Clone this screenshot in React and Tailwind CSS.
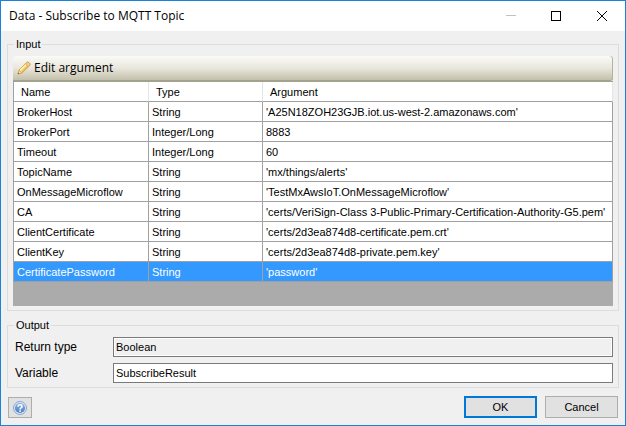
import React from "react";

const rows = [
  ["BrokerHost", "String", "'A25N18ZOH23GJB.iot.us-west-2.amazonaws.com'"],
  ["BrokerPort", "Integer/Long", "8883"],
  ["Timeout", "Integer/Long", "60"],
  ["TopicName", "String", "'mx/things/alerts'"],
  ["OnMessageMicroflow", "String", "'TestMxAwsIoT.OnMessageMicroflow'"],
  ["CA", "String", "'certs/VeriSign-Class 3-Public-Primary-Certification-Authority-G5.pem'"],
  ["ClientCertificate", "String", "'certs/2d3ea874d8-certificate.pem.crt'"],
  ["ClientKey", "String", "'certs/2d3ea874d8-private.pem.key'"],
  ["CertificatePassword", "String", "'password'"],
];

function PencilIcon() {
  return (
    <svg width="14" height="14" viewBox="0 0 14 14" aria-hidden="true">
      <path d="M1 13 L2.2 9 L9.2 1.8 Q10.6 0.4 12 1.6 L12.6 2.3 Q13.6 3.6 12.3 5 L5 12 Z" fill="#f8d679" stroke="#c79a4a" strokeWidth="0.8" strokeLinejoin="round" />
      <path d="M3.4 9.2 L9.8 2.8" stroke="#fff0b0" strokeWidth="1.4" />
      <path d="M5 10.9 L11.6 4.4" stroke="#ecb450" strokeWidth="1.2" />
      <path d="M9.2 1.8 Q10.6 0.4 12 1.6 L12.6 2.3 Q13.6 3.6 12.3 5 L11.4 5.8 L8.4 2.7 Z" fill="#f6c795" stroke="#c79a4a" strokeWidth="0.6" />
      <path d="M1 13 L2.1 9.4 L4.7 11.9 Z" fill="#f5e3c4" stroke="#c79a4a" strokeWidth="0.6" />
      <path d="M0.9 13.1 L1.4 11.6 L2.5 12.6 Z" fill="#6a5638" />
    </svg>
  );
}

function HelpIcon() {
  return (
    <svg width="14" height="14" viewBox="0 0 14 14" aria-hidden="true">
      <defs>
        <linearGradient id="helpFill" x1="0" y1="0" x2="0" y2="1">
          <stop offset="0" stopColor="#8fb3e0" />
          <stop offset="1" stopColor="#4a7fc2" />
        </linearGradient>
      </defs>
      <circle cx="7" cy="7" r="6.5" fill="#dce8f7" stroke="#7d9fcd" strokeWidth="0.9" />
      <circle cx="7" cy="7" r="5.1" fill="url(#helpFill)" />
      <path d="M5 5.6 Q5.1 3.8 7 3.8 Q9 3.8 9 5.4 Q9 6.4 8 6.9 Q7.1 7.4 7.1 8.4" fill="none" stroke="#fff" strokeWidth="1.6" />
      <rect x="6.3" y="9.3" width="1.6" height="1.6" fill="#fff" />
    </svg>
  );
}

function Group({ title, className, children }) {
  return (
    <fieldset className={`min-w-0 border border-[#dcdcdc] px-[5px] pt-1 pb-1 ${className}`}>
      <legend className="ml-px h-4 px-0.5 leading-4">{title}</legend>
      {children}
    </fieldset>
  );
}

export default function App() {
  return (
    <main className="flex min-h-screen flex-col border border-[#1883d7] bg-[#f0f0f0] font-['Liberation_Sans',Arial,sans-serif] text-[11px] text-black">
      <header className="flex h-[30px] shrink-0 items-center justify-between bg-white pl-2 font-['Open_Sans','Noto_Sans',sans-serif]">
        <h1 className="text-[12px]">Data - Subscribe to MQTT Topic</h1>
        <div className="flex h-full">
          <button type="button" aria-label="Minimize" disabled className="flex w-[45px] items-center justify-center">
            <svg width="10" height="10" shapeRendering="crispEdges"><path d="M0 4.5H10" stroke="#c0c0c0" /></svg>
          </button>
          <button type="button" aria-label="Maximize" className="flex w-[45px] items-center justify-center">
            <svg width="10" height="10" shapeRendering="crispEdges"><rect x="0.5" y="0.5" width="9" height="9" fill="none" stroke="#000" /></svg>
          </button>
          <button type="button" aria-label="Close" className="flex w-[47px] items-center justify-center">
            <svg width="10" height="10"><path d="M0 0L10 10M10 0L0 10" stroke="#000" /></svg>
          </button>
        </div>
      </header>

      <div className="flex grow flex-col px-1.5 pt-[5px] pb-[7px]">
        <Group title="Input" className="flex grow flex-col">
          <div className="flex h-[25px] shrink-0 items-center rounded-t-[3px] rounded-br-[3px] border-b border-[#a5a47c] bg-linear-to-b from-[#fafaf7] via-[#e9e7dd] to-[#c3c0ab] shadow-[inset_-1px_0_0_#b5b39c]">
            <button type="button" className="flex items-center gap-[3px] pl-1 font-['Open_Sans','Noto_Sans',sans-serif] text-[12px]">
              <PencilIcon />
              Edit argument
            </button>
          </div>
          <div className="grow bg-[#ababab] pb-6">
            <table className="w-full table-fixed border-separate border-spacing-0 border-t border-l border-[#a0a0a0] bg-white text-left">
              <colgroup>
                <col className="w-[135px]" />
                <col className="w-[114px]" />
                <col />
              </colgroup>
              <thead>
                <tr>
                  {["Name", "Type", "Argument"].map((h) => (
                    <th key={h} scope="col" className="h-5 border-r border-b border-r-[#e5e5e5] border-b-[#a0a0a0] pt-px pb-0 pl-[7px] leading-[18px] font-normal">{h}</th>
                  ))}
                </tr>
              </thead>
              <tbody>
                {rows.map((r, i) => (
                  <tr key={r[0]} aria-selected={i === 8} className={i === 8 ? "bg-[#3399ff] text-white" : "bg-white"}>
                    {r.map((c, j) => (
                      <td key={j} className="h-5 border-r border-b border-[#a0a0a0] pt-px pb-0 pl-[3px] leading-[18px] whitespace-nowrap">{c}</td>
                    ))}
                  </tr>
                ))}
              </tbody>
            </table>
          </div>
        </Group>

        <Group title="Output" className="mt-1.5">
          <div className="grid grid-cols-[98px_1fr] items-center gap-x-0.5 gap-y-1.5">
            <label htmlFor="returnType" className="pl-0.5 text-[12px]">Return type</label>
            <input id="returnType" readOnly defaultValue="Boolean" className="h-5 w-full min-w-0 border border-[#7a7a7a] bg-[#f0f0f0] px-0.5 shadow-[inset_0_0_0_1px_#fff] outline-none" />
            <label htmlFor="variable" className="pl-0.5 text-[12px]">Variable</label>
            <input id="variable" defaultValue="SubscribeResult" className="h-5 w-full min-w-0 border border-[#7a7a7a] bg-white px-0.5 outline-none" />
          </div>
        </Group>

        <footer className="mt-2 flex items-end gap-2 px-px">
          <button type="button" aria-label="Help" className="mr-auto flex h-[21px] w-6 items-center justify-center border border-[#adadad] bg-[#e1e1e1]">
            <HelpIcon />
          </button>
          <button type="button" className="h-[22px] w-[73px] border-2 border-[#0078d7] bg-[#e1e1e1] leading-[18px]">OK</button>
          <button type="button" className="h-[22px] w-[73px] border border-[#adadad] bg-[#e1e1e1] leading-5">Cancel</button>
        </footer>
      </div>
    </main>
  );
}
